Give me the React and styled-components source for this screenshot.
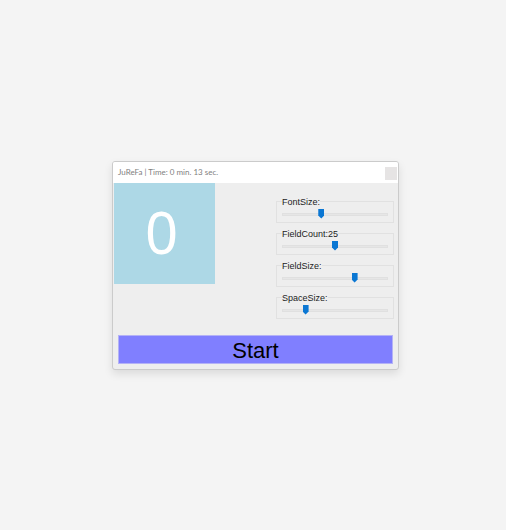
import React, { useState } from "react";
import styled, { createGlobalStyle } from "styled-components";

const GlobalStyle = createGlobalStyle`
  *, *::before, *::after { box-sizing: border-box; }
  body {
    margin: 0;
    background: #f4f4f4;
    font-family: "Liberation Sans", Arial, sans-serif;
  }
`;

const Desktop = styled.main`
  min-height: 100vh;
  display: grid;
  align-items: center;
  padding: 0 107px 0 112px;
`;

const Window = styled.section`
  display: flex;
  flex-direction: column;
  border: 1px solid #cbcbcb;
  border-radius: 3px;
  background: #eeeeee;
  box-shadow: 0 4px 8px rgba(0, 0, 0, 0.1);
  overflow: hidden;
`;

const TitleBar = styled.header`
  display: flex;
  align-items: flex-start;
  justify-content: space-between;
  height: 21px;
  padding-left: 5px;
  background: #ffffff;
`;

const Title = styled.h1`
  margin: 0;
  font: 400 8px/21px Lato, "Noto Sans", sans-serif;
  color: #808080;
  white-space: nowrap;
`;

const CloseButton = styled.button`
  width: 12px;
  height: 13px;
  margin: 5px 1px 0 0;
  padding: 0;
  border: 0;
  background: #e6e4e4;
`;

const Body = styled.div`
  display: flex;
  justify-content: space-between;
  padding: 0 4px 0 1px;
`;

const Field = styled.button`
  display: flex;
  align-items: center;
  justify-content: center;
  width: 101px;
  height: 101px;
  padding: 0 6px 2px 0;
  border: 0;
  background: #add8e6;
  color: #ffffff;
  font: 400 58px/1 "Noto Sans", "Open Sans", sans-serif;
`;

const Settings = styled.form`
  display: flex;
  flex-direction: column;
  gap: 5px;
  width: 118px;
  padding-top: 13px;
`;

const Group = styled.fieldset`
  min-width: 0;
  height: 27px;
  margin: 0;
  padding: 0 5px;
  border: 1px solid #e1e1e1;
`;

const Legend = styled.legend`
  padding: 0;
  font-size: 9px;
  line-height: 12px;
  color: #1c1c1c;
`;

const Slider = styled.input`
  appearance: none;
  display: block;
  width: 100%;
  height: 13px;
  margin: 0;
  background: transparent;

  &::-webkit-slider-runnable-track {
    height: 3px;
    border: 1px solid #e0e0e0;
    background: #e6e6e6;
  }

  &::-webkit-slider-thumb {
    appearance: none;
    width: 6px;
    height: 10px;
    margin-top: -5px;
    background: #0b77d3;
    clip-path: polygon(0 0, 100% 0, 100% 70%, 50% 100%, 0 70%);
  }
`;

const StartButton = styled.button`
  height: 29px;
  margin: 16px 5px 5px;
  padding: 2px 0 0;
  border: 1px solid #b4b2f6;
  background: #807fff;
  color: #000000;
  font: 400 22px/25px "Liberation Sans", Arial, sans-serif;
`;

const settings = [
  { id: "font-size", label: "FontSize:", value: 36 },
  { id: "field-count", label: "FieldCount:25", value: 50 },
  { id: "field-size", label: "FieldSize:", value: 70 },
  { id: "space-size", label: "SpaceSize:", value: 20 },
];

function Setting({ id, label, value }) {
  const [current, setCurrent] = useState(value);
  return (
    <Group>
      <Legend>
        <label htmlFor={id}>{label}</label>
      </Legend>
      <Slider
        id={id}
        type="range"
        min="0"
        max="100"
        value={current}
        onChange={(event) => setCurrent(Number(event.target.value))}
      />
    </Group>
  );
}

export default function App() {
  return (
    <>
      <GlobalStyle />
      <Desktop>
        <Window>
          <TitleBar>
            <Title>JuReFa | Time: 0 min. 13 sec.</Title>
            <CloseButton type="button" aria-label="Close" />
          </TitleBar>
          <Body>
            <Field type="button">0</Field>
            <Settings>
              {settings.map((item) => (
                <Setting key={item.id} {...item} />
              ))}
            </Settings>
          </Body>
          <StartButton type="button">Start</StartButton>
        </Window>
      </Desktop>
    </>
  );
}
